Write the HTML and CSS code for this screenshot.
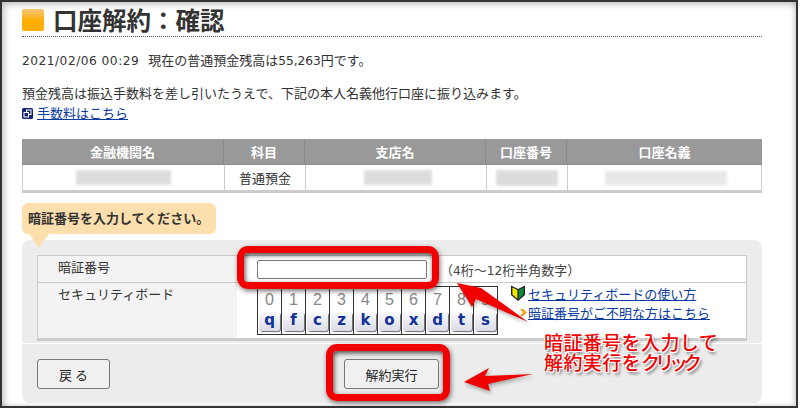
FILE: index.html
```html
<!DOCTYPE html>
<html lang="ja">
<head>
<meta charset="utf-8">
<title>口座解約：確認</title>
<link rel="stylesheet" href="styles.css">
</head>
<body>
<div class="frame">
  <div class="content">
    <h1 class="title"><span class="title-mark"></span>口座解約：確認</h1>
    <p class="balance"><span class="num date">2021/02/06 00:29</span> 現在の普通預金残高は<span class="num">55,263</span>円です。</p>
    <p class="note">預金残高は振込手数料を差し引いたうえで、下記の本人名義他行口座に振り込みます。</p>
    <p class="fee"><svg class="ext" viewBox="0 0 11 11"><rect width="11" height="11" rx="1.5" fill="#14246e"/><rect x="4.5" y="2" width="4.5" height="4.5" fill="none" stroke="#fff"/><rect x="2" y="4.5" width="4.5" height="4.5" fill="#14246e" stroke="#fff"/></svg><a href="#">手数料はこちら</a></p>

    <div class="account">
      <div class="acc-row acc-head">
        <div>金融機関名</div><div>科目</div><div>支店名</div><div>口座番号</div><div>口座名義</div>
      </div>
      <div class="acc-row acc-body">
        <div><span class="blur blur-a"></span></div>
        <div>普通預金</div>
        <div><span class="blur blur-b"></span></div>
        <div><span class="blur blur-c"></span></div>
        <div><span class="blur blur-d"></span></div>
      </div>
    </div>

    <div class="bubble">暗証番号を入力してください。</div>

    <div class="panel">
      <div class="form">
        <div class="form-row row-pin">
          <div class="form-label">暗証番号</div>
          <div class="form-field">
            <span class="pin-input"></span>
            <span class="hint">（<span class="num">4</span>桁～<span class="num">12</span>桁半角数字）</span>
          </div>
        </div>
        <div class="form-row row-board">
          <div class="form-label">セキュリティボード</div>
          <div class="form-field board-field">
            <div class="board">
              <span class="digit">0</span><span class="digit">1</span><span class="digit">2</span><span class="digit">3</span><span class="digit">4</span><span class="digit">5</span><span class="digit">6</span><span class="digit">7</span><span class="digit">8</span><span class="digit">9</span>
              <span class="key"><b>q</b></span><span class="key"><b>f</b></span><span class="key"><b>c</b></span><span class="key"><b>z</b></span><span class="key"><b>k</b></span><span class="key"><b>o</b></span><span class="key"><b>x</b></span><span class="key"><b>d</b></span><span class="key"><b>t</b></span><span class="key"><b>s</b></span>
            </div>
            <div class="board-links">
              <div class="board-link"><svg class="leaf" viewBox="0 0 16 18"><path d="M1 1.500 8 5l7-3.500V11l-7 6-7-6z" fill="#222"/><path d="M2.400 3.600 7.400 6v9L2.400 10.600z" fill="#f2e600"/><path d="M13.600 3.600 8.600 6v9l5-4.400z" fill="#0b8a3a"/></svg><a href="#">セキュリティボードの使い方</a></div>
              <div class="board-link"><svg class="chev" viewBox="0 0 9 9"><path d="M1 1h3l4 3.500-4 3.500H1l3-3.500z" fill="#f0a21e"/></svg><a href="#">暗証番号がご不明な方はこちら</a></div>
            </div>
          </div>
        </div>
      </div>
      <div class="actions">
        <button class="btn" type="button">戻 る</button>
        <button class="btn btn-run" type="button">解約実行</button>
      </div>
    </div>
  </div>

  <span class="callout callout-pin"></span>
  <span class="callout callout-run"></span>
  <svg class="arrows" viewBox="0 0 801 410" width="801" height="410">
    <path d="M457 283 481 288 528 322 476 299 472 307z" fill="#f00000" />
    <path d="M464 382 489 368 485 376 533 374 488 384 490 391z" fill="#f00000" />
  </svg>
  <div class="annotation">暗証番号を入力して<br>解約実行を<span class="kana">クリック</span></div>
</div>
</body>
</html>
```

FILE: styles.css
```css
* { box-sizing: border-box; }
html, body { margin: 0; padding: 0; background: #fff; }
body {
  width: 801px;
  height: 410px;
  overflow: hidden;
  font-family: "Noto Sans CJK JP", "DejaVu Sans", sans-serif;
  font-size: 13px;
  color: #333;
}
.num { font-family: "DejaVu Sans", sans-serif; font-size: 12.200px; }
.date { letter-spacing: .5px; margin-right: 6px; }
.frame {
  position: relative;
  width: 798px;
  height: 408px;
  border: 2px solid #333;
  box-shadow: inset 3px 3px 6px rgba(0,0,0,.22), inset -3px -1px 4px rgba(0,0,0,.12);
  background: #fff;
  overflow: hidden;
}
.content { padding: 5px 0 0 20px; width: 760px; }
.title {
  display: flex;
  align-items: center;
  height: 30px;
  margin: 0;
  border-bottom: 1px dotted #555;
  padding-bottom: 3px;
  font-size: 24.500px;
  line-height: 26px;
  font-weight: 700;
  color: #333;
}
.title-mark {
  width: 22px;
  height: 22px;
  margin-right: 9px;
  border-radius: 2px;
  background: linear-gradient(#f3c678, #ffae00 55%);
}
.balance, .note, .fee { margin: 0; line-height: 18px; }
.balance { margin-top: 14px; }
.note { margin-top: 14px; }
.fee { display: flex; align-items: center; margin-top: 2px; height: 18px; }
.ext { width: 11px; height: 11px; margin-right: 4px; }
a { color: #0b3aa0; text-decoration: underline; }
.account { margin-top: 17px; border-bottom: 3px solid #ccc; width: 740px; }
.acc-row { display: grid; grid-template-columns: 201px 81px 181px 81px 196px; }
.acc-head {
  height: 26px;
  background: #999;
  border-bottom: 1px solid #8c8c8c;
  color: #fff;
  font-weight: 700;
}
.acc-head > div {
  display: flex; align-items: center; justify-content: center;
  border-left: 1px solid #8a8a8a;
}
.acc-head > div:first-child { border-left: 0; }
.acc-body { height: 25px; border-left: 1px solid #ccc; border-right: 1px solid #ccc; }
.acc-body > div {
  display: flex; align-items: center; justify-content: center;
  border-left: 1px solid #ccc;
}
.acc-body > div:first-child { border-left: 0; }
.blur { display: block; background: #dcdcdc; filter: blur(1.500px); }
.blur-a { width: 95px; height: 15px; }
.blur-b { width: 68px; height: 15px; margin-left: 4px; }
.blur-c { width: 62px; height: 16px; }
.blur-d { width: 122px; height: 14px; background: #e8e8e8; }
.bubble {
  position: relative;
  width: 194px;
  height: 31px;
  margin-top: 10px;
  padding-left: 6px;
  border-radius: 6px;
  background: #fddfae;
  line-height: 29px;
  font-weight: 700;
  z-index: 1;
}
.bubble::after {
  content: "";
  position: absolute;
  left: 7px;
  top: 31px;
  border: 10px solid transparent;
  border-bottom: 0;
  border-top: 14px solid #fddfae;
}
.panel {
  width: 740px;
  height: 163px;
  margin-top: 6px;
  padding-top: 15px;
  border-radius: 8px;
  background: #ececec;
}
.form {
  margin-left: 15px;
  width: 710px;
  border: 1px solid #c8c8c8;
  border-bottom: 3px solid #ccc;
  height: 86px;
}
.form-row { display: flex; }
.row-pin { height: 27px; border-bottom: 1px solid #c8c8c8; }
.row-board { height: 55px; }
.form-label {
  width: 199px;
  padding: 2px 0 0 20px;
  background: #f3f3f3;
  line-height: 18px;
}
.form-field { flex: 1; display: flex; align-items: center; padding-left: 20px; background: #fff; }
.pin-input {
  width: 170px;
  height: 19px;
  border: 1px solid #777;
  border-radius: 2px;
  background: #fff;
}
.hint { margin-left: 13px; color: #444; }
.board-field { align-items: flex-start; padding-top: 3px; }
.board {
  display: grid;
  grid-template-columns: repeat(10, 24px);
  grid-template-rows: 25px 22px;
  width: 241px;
  height: 49px;
  border: 1px solid #333;
}
.digit {
  display: flex; align-items: center; justify-content: center;
  border-right: 1px solid #333;
  color: #888;
  font-family: "Liberation Sans", sans-serif;
  font-size: 16px;
}
.key {
  display: flex; align-items: flex-start; justify-content: center;
  border-right: 1px solid #333;
  padding: 0 1px;
}
.key b {
  display: block;
  width: 100%;
  height: 19px;
  border-radius: 3px;
  background: linear-gradient(#f9fafc, #d9dce5);
  box-shadow: 1px 1px 1px #666;
  color: #12329a;
  font-family: "DejaVu Sans", sans-serif;
  font-size: 15px;
  line-height: 17px;
  text-align: center;
}
.board-links { margin-left: 12px; }
.board-link { display: flex; align-items: center; height: 20px; }
.board-link:first-child { margin-top: -3px; margin-bottom: -1px; }
.leaf { width: 16px; height: 18px; margin-right: 2px; }
.chev { width: 9px; height: 9px; margin: 0 0 0 9px; }
.actions {
  display: flex;
  position: relative;
  height: 60px;
  margin-top: 2px;
  padding: 15px 0 0 15px;
  border-top: 1px solid #fff;
}
.btn {
  height: 30px;
  width: 73px;
  padding: 0;
  border: 1px solid #777;
  border-radius: 3px;
  background: #f0f0f0;
  color: #222;
  font-family: "Noto Sans CJK JP", sans-serif;
  font-size: 13px;
}
.btn-run { width: 95px; margin-left: 234px; }
.callout {
  position: absolute;
  border: 7px solid #f00000;
  border-radius: 11px;
  box-shadow: 1px 2px 5px rgba(0,0,0,.55), inset 1px 2px 5px rgba(0,0,0,.7);
}
.callout-pin { left: 235px; top: 244px; width: 202px; height: 43px; }
.callout-run { left: 324px; top: 342px; width: 124px; height: 57px; }
.arrows {
  position: absolute;
  left: -2px;
  top: -2px;
  filter: drop-shadow(1px 2px 2px rgba(0,0,0,.35));
  pointer-events: none;
}
.annotation {
  position: absolute;
  left: 542px;
  top: 330px;
  font-size: 19px;
  line-height: 20px;
  letter-spacing: .4px;
  font-weight: 500;
  color: #f00000;
  text-shadow: 1px 1px 0 #fff, -1px -1px 0 #fff, 1px -1px 0 #fff, -1px 1px 0 #fff, 2px 3px 3px rgba(0,0,0,.5);
}
.kana { letter-spacing: -5px; }
```
